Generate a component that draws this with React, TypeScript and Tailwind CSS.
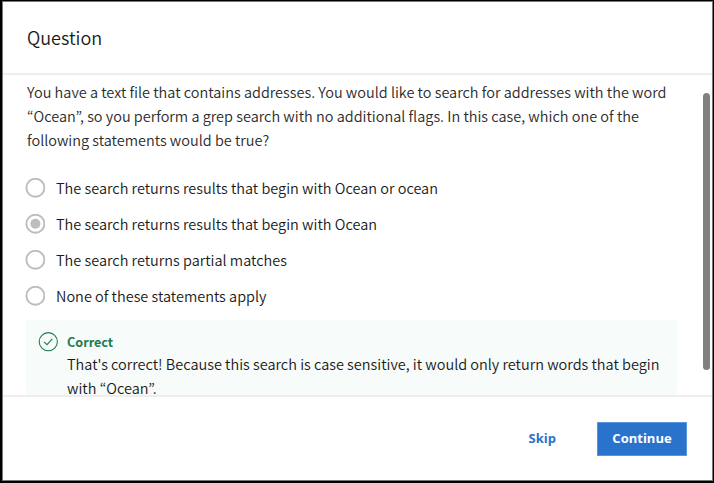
import React from "react";

const options = [
  { label: "The search returns results that begin with Ocean or ocean", selected: false },
  { label: "The search returns results that begin with Ocean", selected: true },
  { label: "The search returns partial matches", selected: false },
  { label: "None of these statements apply", selected: false },
];

function Radio({ selected }: { selected: boolean }) {
  return (
    <svg className="size-5 shrink-0" viewBox="0 0 20 20" fill="none">
      <circle cx="10.4" cy="9.7" r="9" stroke="#bdbdbd" strokeWidth="1.9" />
      {selected && <circle cx="10.4" cy="9.7" r="5" fill="#bdbdbd" />}
    </svg>
  );
}

function CheckCircle() {
  return (
    <svg className="mt-3 ml-3 size-5 shrink-0" viewBox="0 0 20 20" fill="none" stroke="#1d7c50" strokeWidth="1.1">
      <circle cx="10.3" cy="9.7" r="9.1" />
      <path d="M6 9.9 9 12.7 14.3 6.9" />
    </svg>
  );
}

export default function App() {
  return (
    <div className="h-[483px] w-[714px] bg-black pt-px pr-px pb-[2px] pl-[2px] font-['Noto_Sans_CJK_KR','Open_Sans',sans-serif] font-[350]">
      <div className="flex h-[480px] w-[711px] flex-col border border-[#777] bg-white">
        <header className="flex h-[73px] shrink-0 items-center border-b-2 border-[#eeeeee] pb-[2px] pl-6">
          <h1 className="text-[18px] leading-6 font-[350] text-[#1a1a1a]">Question</h1>
        </header>
        <main className="flex h-[320px] shrink-0 justify-between overflow-hidden">
          <div className="ml-6 w-[650px] whitespace-nowrap">
            <div className="pt-[5px] text-[14.49px] leading-6 text-[#2b2b2b]">
              <p>You have a text file that contains addresses. You would like to search for addresses with the word</p>
              <p>“Ocean”, so you perform a grep search with no additional flags. In this case, which one of the</p>
              <p>following statements would be true?</p>
            </div>
            <div className="mt-[18px] -ml-[2px] flex flex-col">
              {options.map((option) => (
                <div key={option.label} className="flex h-9 items-center gap-[11px]">
                  <Radio selected={option.selected} />
                  <span className="text-[14.49px] leading-6 text-[#1a1a1a]">{option.label}</span>
                </div>
              ))}
            </div>
            <div className="mt-[6px] -ml-px flex h-[100px] w-[651px] bg-[#f7fbf9]">
              <CheckCircle />
              <div className="ml-[9px] pt-[11px] text-[14.49px] leading-6 text-[#1a1a1a]">
                <p className="text-[12.6px] leading-[22px] font-bold text-[#1d7c50]">Correct</p>
                <div className="-mt-px">
                  <p>That's correct! Because this search is case sensitive, it would only return words that begin</p>
                  <p>with “Ocean”.</p>
                </div>
              </div>
            </div>
          </div>
          <div className="mt-[18px] mr-[2px] h-[277px] w-[7px] rounded-full bg-[#808080]" />
        </main>
        <footer className="flex grow items-center justify-end border-t-2 border-[#eeeeee] pr-[25px] font-['Open_Sans',sans-serif] text-[13px] font-bold">
          <button className="mr-[41px] text-[#2a73cc]">Skip</button>
          <button className="h-[34px] w-[90px] border border-[#5a96dc] bg-[#2a73cc] text-white">Continue</button>
        </footer>
      </div>
    </div>
  );
}
